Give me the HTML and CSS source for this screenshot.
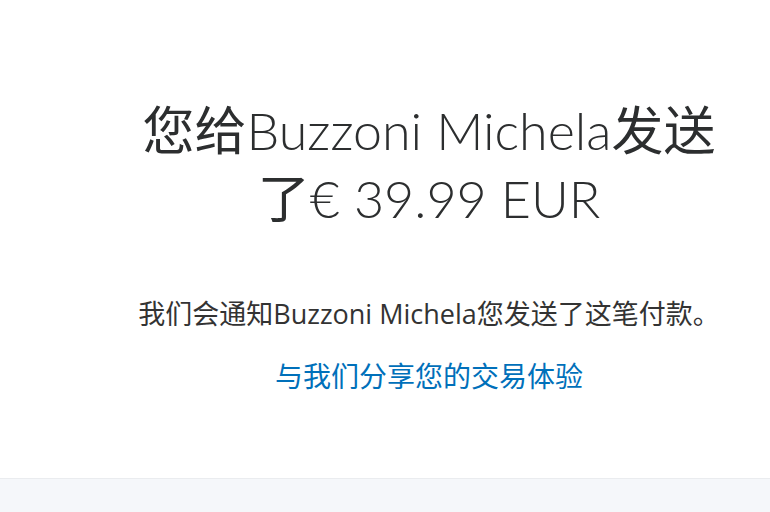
FILE: index.html
```html
<!DOCTYPE html>
<html lang="zh-CN">
<head>
    <meta charset="UTF-8">
    <meta name="viewport" content="width=device-width, initial-scale=1.0">
    <title>付款已发送</title>
    <link rel="stylesheet" href="styles.css">
</head>
<body>
    <main class="done">
        <div class="done-inner">
            <h1 class="done-title">您给<span class="done-strong">Buzzoni Michela</span>发送了<span class="done-strong">€ 39.99 EUR</span></h1>
            <p class="done-note">我们会通知Buzzoni Michela您发送了这笔付款。</p>
            <a class="done-link" href="#">与我们分享您的交易体验</a>
        </div>
    </main>
    <footer class="page-foot"></footer>
</body>
</html>
```

FILE: styles.css
```css
body {
    margin: 0;
    background-color: #ffffff;
    font-family: "Open Sans", "Noto Sans CJK SC", sans-serif;
    color: #2c2e2f;
}
.done {
    height: 478px;
    padding-left: 88px;
    box-sizing: border-box;
}
.done-inner {
    width: 600px;
    margin: 0 auto;
    padding-top: 96px;
    text-align: center;
}
.done-title {
    margin: 0;
    font-family: "Lato", "Noto Sans CJK SC", sans-serif;
    font-weight: 400;
    font-size: 52px;
    line-height: 68px;
    color: #2c2e2f;
}
.done-strong {
    font-weight: 300;
}
.done-note {
    margin: 64px -20px 0;
    font-size: 27px;
    line-height: 36px;
    color: #333333;
}
.done-link {
    display: inline-block;
    margin-top: 24px;
    font-size: 28px;
    line-height: 40px;
    color: #0070ba;
    text-decoration: none;
}
.page-foot {
    height: 34px;
    border-top: 1px solid #eaecef;
    background-color: #f5f7fa;
}
```
